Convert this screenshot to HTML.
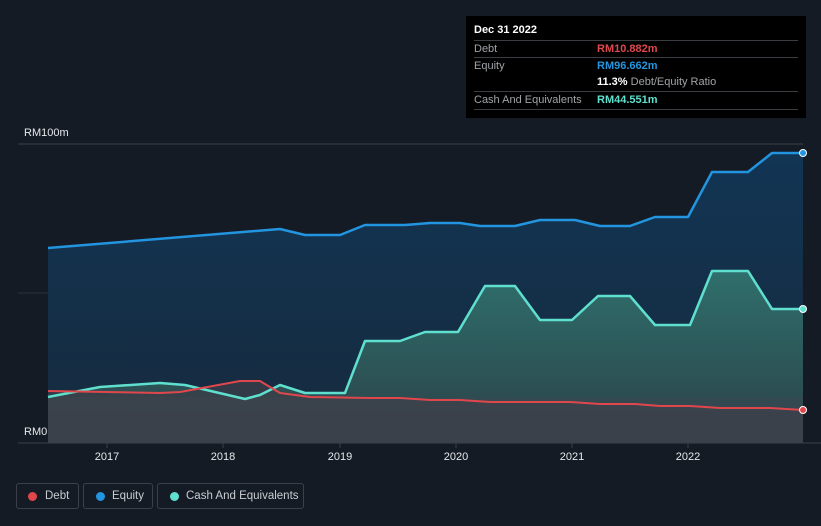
<!DOCTYPE html>
<html><head><meta charset="utf-8"><style>
body{margin:0;width:821px;height:526px;background:#151b25;font-family:"Liberation Sans",sans-serif;overflow:hidden;position:relative}
.tip{position:absolute;left:466px;top:16px;width:340px;height:102px;background:#000;color:#fff;font-size:11px}
.row{position:absolute;left:8px;width:324px;border-top:1px solid #3a3d42;height:17px;line-height:17px}
.row .l{position:absolute;left:0;color:#a0a3a8}
.row .v{position:absolute;left:123px;font-weight:bold}
.leg{position:absolute;top:483px;height:26px;border:1px solid #3b414b;border-radius:3px;color:#c9ccd1;font-size:11.5px;line-height:24px;box-sizing:border-box;white-space:nowrap}
.leg i{position:absolute;top:8px;width:9px;height:9px;border-radius:50%}
</style></head><body>
<svg width="821" height="526" style="position:absolute;left:0;top:0">
<defs>
<linearGradient id="eg" x1="0" y1="0" x2="0" y2="1"><stop offset="0" stop-color="#123554"/><stop offset="1" stop-color="#162a3d"/></linearGradient>
<linearGradient id="cg" x1="0" y1="0" x2="0" y2="1"><stop offset="0" stop-color="#2f6f6c"/><stop offset="1" stop-color="#2a4148"/></linearGradient>
</defs>
<line x1="18" y1="144" x2="803" y2="144" stroke="#3a404a"/>
<line x1="18" y1="293" x2="803" y2="293" stroke="#2b313b"/>
<path d="M48,248 L280,229 305,235 340,235 365,225 405,225 430,223 460,223 480,226 515,226 540,220 575,220 600,226 630,226 655,217 688,217 712,172 748,172 772,153 803,153 L803,443 48,443Z" fill="url(#eg)"/>
<path d="M48,397 L100,387 160,383 185,385 245,399 260,395 280,385 305,393 345,393 365,341 400,341 425,332 458,332 485,286 515,286 540,320 572,320 598,296 630,296 655,325 690,325 712,271 748,271 772,309 803,309 L803,443 48,443Z" fill="url(#cg)"/>
<path d="M48,391 L160,393 180,392 240,381 260,381 280,393 310,397 370,398 400,398 430,400 460,400 490,402 570,402 600,404 635,404 660,406 690,406 720,408 770,408 803,410 L803,443 48,443Z" fill="#3a3f48" opacity="0.8"/>
<path d="M48,397 L803,397 803,443 48,443Z" fill="#41464f" opacity="0.35"/>
<path d="M48,248 L280,229 305,235 340,235 365,225 405,225 430,223 460,223 480,226 515,226 540,220 575,220 600,226 630,226 655,217 688,217 712,172 748,172 772,153 803,153" fill="none" stroke="#2394df" stroke-width="2.5" stroke-linejoin="round"/>
<path d="M48,397 L100,387 160,383 185,385 245,399 260,395 280,385 305,393 345,393 365,341 400,341 425,332 458,332 485,286 515,286 540,320 572,320 598,296 630,296 655,325 690,325 712,271 748,271 772,309 803,309" fill="none" stroke="#5fe0cf" stroke-width="2.5" stroke-linejoin="round"/>
<path d="M48,391 L160,393 180,392 240,381 260,381 280,393 310,397 370,398 400,398 430,400 460,400 490,402 570,402 600,404 635,404 660,406 690,406 720,408 770,408 803,410" fill="none" stroke="#e0474c" stroke-width="2" stroke-linejoin="round"/>
<circle cx="803" cy="153" r="3.5" fill="#2394df" stroke="#fff" stroke-width="1"/>
<circle cx="803" cy="309" r="3.5" fill="#5fe0cf" stroke="#fff" stroke-width="1"/>
<circle cx="803" cy="410" r="3.5" fill="#e0474c" stroke="#fff" stroke-width="1"/>
<line x1="18" y1="443" x2="821" y2="443" stroke="#3a404a"/>
<g stroke="#3a404a"><line x1="107" y1="443" x2="107" y2="448"/><line x1="223" y1="443" x2="223" y2="448"/><line x1="340" y1="443" x2="340" y2="448"/><line x1="456" y1="443" x2="456" y2="448"/><line x1="572" y1="443" x2="572" y2="448"/><line x1="688" y1="443" x2="688" y2="448"/></g>
<g fill="#e6e8eb" font-size="11" text-anchor="middle" font-family="Liberation Sans"><text x="107" y="460">2017</text><text x="223" y="460">2018</text><text x="340" y="460">2019</text><text x="456" y="460">2020</text><text x="572" y="460">2021</text><text x="688" y="460">2022</text></g>
<rect x="18" y="425" width="30" height="17" fill="#151b25"/>
<text x="24" y="435" fill="#e6e8eb" font-size="11" font-family="Liberation Sans">RM0</text>
<text x="24" y="136" fill="#e6e8eb" font-size="11" font-family="Liberation Sans">RM100m</text>
</svg>
<div class="tip">
<div style="position:absolute;left:8px;top:8px;font-weight:bold">Dec 31 2022</div>
<div class="row" style="top:24px"><span class="l">Debt</span><span class="v" style="color:#e0474c">RM10.882m</span></div>
<div class="row" style="top:41px"><span class="l">Equity</span><span class="v" style="color:#2394df">RM96.662m</span></div>
<div class="row" style="top:58px;border-top:none"><span class="v" style="color:#fff">11.3% <span style="color:#a0a3a8;font-weight:normal">Debt/Equity Ratio</span></span></div>
<div class="row" style="top:75px"><span class="l">Cash And Equivalents</span><span class="v" style="color:#5fe0cf">RM44.551m</span></div>
<div class="row" style="top:93px;height:0"></div>
</div>
<div class="leg" style="left:16px;width:63px"><i style="left:11px;background:#e0474c"></i><span style="position:absolute;left:28px">Debt</span></div>
<div class="leg" style="left:83px;width:70px"><i style="left:12px;background:#2394df"></i><span style="position:absolute;left:28px">Equity</span></div>
<div class="leg" style="left:157px;width:147px"><i style="left:12px;background:#5fe0cf"></i><span style="position:absolute;left:28px">Cash And Equivalents</span></div>
</body></html>
